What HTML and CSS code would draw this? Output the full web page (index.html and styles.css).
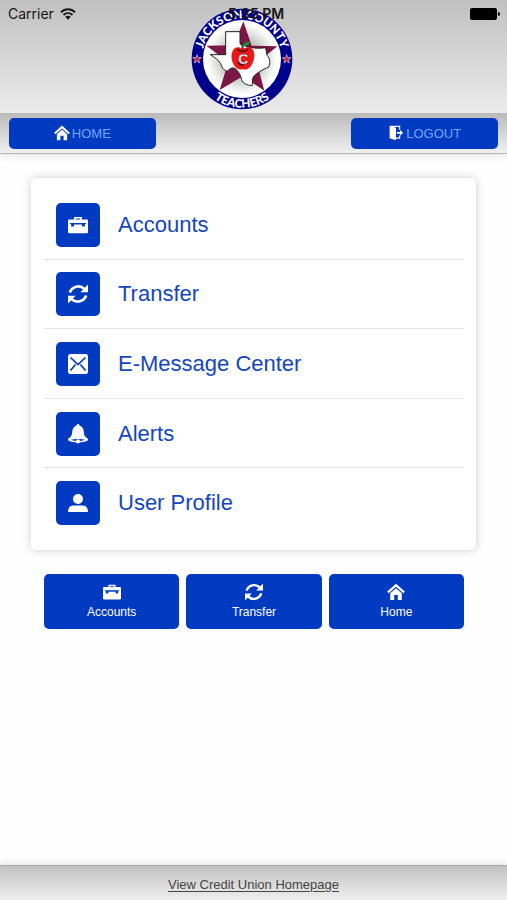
FILE: index.html
```html
<!DOCTYPE html>
<html lang="en">
<head>
<meta charset="utf-8">
<meta name="viewport" content="width=device-width, initial-scale=1">
<title>Jackson County Teachers Credit Union</title>
<link rel="stylesheet" href="styles.css">
</head>
<body>
<svg class="sprite" aria-hidden="true">
  <symbol id="home" viewBox="0 0 20 20">
    <path d="M1 10.500 10 2.400 19 10.500" fill="none" stroke="currentColor" stroke-width="2.500"/>
    <path d="M3.600 11.500 10 5.700l6.400 5.800V19h-4.400v-5.700H8V19H3.600z" fill="currentColor"/>
  </symbol>
  <symbol id="logout" viewBox="0 0 20 20">
    <path d="M2 1 10 3.500v15.500l-8-2.500z" fill="currentColor"/>
    <path d="M3 1.800h11.500v4M14.500 13v3.500H10" fill="none" stroke="currentColor" stroke-width="1.500"/>
    <path d="M11 8.600h4V6.200L19 9.800 15 13.400v-2.400h-4z" fill="currentColor"/>
  </symbol>
  <symbol id="case" viewBox="0 0 20 20">
    <path d="M6.800 5V2.800h6.400V5" fill="none" stroke="currentColor" stroke-width="1.500"/>
    <path d="M1 4.500h18q1 0 1 1v11.500q0 1.300-1.300 1.300H1.300Q0 18.300 0 17V5.500q0-1 1-1z" fill="currentColor"/>
    <path d="M1.500 8h17L16.800 9.600v2h-2.800V9.600H6v2H3.200V9.600z" fill="#003ac0"/>
  </symbol>
  <symbol id="sync" viewBox="0 0 20 20">
    <path d="M1.800 8.500C4 2.500 11.500 .2 16.500 5M18.200 11.500C16 17.500 8.500 19.800 3.500 15" fill="none" stroke="currentColor" stroke-width="2.700"/>
    <path d="M20 .6v7.600h-7.600zM0 19.400v-7.600h7.600z" fill="currentColor"/>
  </symbol>
  <symbol id="mail" viewBox="0 0 20 20">
    <rect width="20" height="20" rx="2.500" fill="currentColor"/>
    <path d="m2.500 3.500 7.500 7 7.500-7M2.500 16.500l5-6M17.500 16.500l-5-6" fill="none" stroke="#003ac0" stroke-width="1.700"/>
  </symbol>
  <symbol id="bell" viewBox="0 0 20 20">
    <path d="M10 0c1 0 1.400.7 1.400 1.500C14.500 2.300 15.600 5 15.800 8c.2 3.500 1.200 5 4.200 6.700v1.600c-2 1.500-6 2.200-10 2.200S2 17.800 0 16.300v-1.600C3 13 4 11.500 4.200 8 4.400 5 5.500 2.300 8.600 1.500 8.600.7 9 0 10 0z" fill="currentColor"/>
    <path d="M3 15.800c3-1.200 11-1.200 14 0-1.500.7-3 1-5 1.200a2 1.700 0 0 0-4 0c-2-.2-3.500-.5-5-1.200z" fill="#003ac0"/>
    <ellipse cx="10" cy="17.700" rx="1.900" ry="1.800" fill="currentColor"/>
  </symbol>
  <symbol id="user" viewBox="0 0 20 20">
    <circle cx="10" cy="6" r="5" fill="currentColor"/>
    <path d="M0 19c0-4.500 2.200-6.500 5.500-6.500h9c3.300 0 5.500 2 5.500 6.500z" fill="currentColor"/>
  </symbol>
</svg>

<header class="header">
  <svg class="logo" viewBox="60 24 306 306" role="img" aria-label="Jackson County Teachers">
    <defs>
      <path id="arc-top" d="M92 177a121 121 0 0 1 242 0"/>
      <path id="arc-bottom" d="M67 177a146 146 0 0 0 292 0"/>
      <radialGradient id="disc"><stop offset=".5" stop-color="#c2c9c2"/><stop offset=".9" stop-color="#fff"/></radialGradient>
    </defs>
    <circle cx="213" cy="177" r="151" fill="#00008c"/>
    <circle cx="213" cy="177" r="117" fill="url(#disc)"/>
    <path d="m217 64 25 73 77 2-61 49 22 84-65-43-69 41 26-84-66-49 83-1z" fill="#7c1644"/>
    <path d="M164 95h43v36c22 12 46 16 77 12l4 23c10 10 10 22 5 35-18 8-37 18-46 30-5 8-1 18-4 26-14-1-28-7-31-18-3-14-9-25-19-33-9-6-19 2-25 8-10-3-16-13-19-23-6-11-17-18-31-27h46z" fill="#fff" stroke="#222" stroke-width="3"/>
    <path d="M215 147c25-14 39 3 34 29-5 22-18 36-33 32-15 4-31-10-34-32-3-26 12-43 33-29z" fill="#ed1717"/>
    <path d="M215 148q1-13-5-18M198 148q19 13 34-1M201 186q2 9 17 9" fill="none" stroke="#491613" stroke-width="5"/>
    <path d="M213 138q6-14 24-13-4 16-24 13z" fill="#168e34"/>
    <text class="logo-letter" x="217" y="191">C</text>
    <text class="logo-text"><textPath href="#arc-top" startOffset="50%">JACKSON COUNTY</textPath></text>
    <text class="logo-text"><textPath href="#arc-bottom" startOffset="50%">TEACHERS</textPath></text>
    <g fill="#c51c39" stroke="#ddd" stroke-width="2">
      <path id="small-star" d="m78 164 3 9h10l-8 6 3 10-8-6-8 6 3-10-8-6h10z"/>
      <use href="#small-star" x="269"/>
    </g>
  </svg>
  <div class="status">
    <span class="carrier">Carrier
      <svg class="wifi" viewBox="0 0 16 12" aria-hidden="true"><g fill="none" stroke="#151515" stroke-width="1.900"><path d="M1 4.300c4-4 10-4 14 0M3.500 7c2.600-2.500 6.400-2.500 9 0"/></g><path d="M5.300 8.800q2.700-2.200 5.400 0L8 11.700z" fill="#151515"/></svg>
    </span>
    <time class="time">5:35 PM</time>
    <svg class="battery" viewBox="0 0 30 12" role="img" aria-label="Battery full"><rect width="27" height="12" rx="2"/><path d="M28 4q2 0 2 2t-2 2z"/></svg>
  </div>
</header>

<nav class="toolbar" aria-label="Session">
  <button class="tool" type="button"><svg aria-hidden="true"><use href="#home"/></svg>HOME</button>
  <button class="tool" type="button"><svg aria-hidden="true"><use href="#logout"/></svg>LOGOUT</button>
</nav>

<main class="main">
  <nav class="card" aria-label="Main menu">
    <a class="row" href="#"><span class="tile"><svg aria-hidden="true"><use href="#case"/></svg></span>Accounts</a>
    <a class="row" href="#"><span class="tile"><svg aria-hidden="true"><use href="#sync"/></svg></span>Transfer</a>
    <a class="row" href="#"><span class="tile"><svg aria-hidden="true"><use href="#mail"/></svg></span>E-Message Center</a>
    <a class="row" href="#"><span class="tile"><svg aria-hidden="true"><use href="#bell"/></svg></span>Alerts</a>
    <a class="row" href="#"><span class="tile"><svg aria-hidden="true"><use href="#user"/></svg></span>User Profile</a>
  </nav>
  <nav class="shortcuts" aria-label="Shortcuts">
    <a class="shortcut" href="#"><svg aria-hidden="true"><use href="#case"/></svg>Accounts</a>
    <a class="shortcut" href="#"><svg aria-hidden="true"><use href="#sync"/></svg>Transfer</a>
    <a class="shortcut" href="#"><svg aria-hidden="true"><use href="#home"/></svg>Home</a>
  </nav>
</main>

<footer class="footer"><a href="#">View Credit Union Homepage</a></footer>
</body>
</html>
```
FILE: styles.css
```css
* {
  box-sizing: border-box;
}

body {
  margin: 0;
  min-height: 100vh;
  display: flex;
  flex-direction: column;
  background: #fefefe;
  font-family: "Liberation Sans", Arial, sans-serif;
}

.sprite {
  position: absolute;
  width: 0;
  height: 0;
}

.header {
  position: relative;
  padding: 8px 24px 3px 0;
  background: linear-gradient(#c0c0c0, #ebebeb);
}

.logo {
  display: block;
  width: 102px;
  height: 102px;
  margin: 0 auto;
}

.logo-text {
  fill: #fff;
  font: 900 35px Lato, sans-serif;
  text-anchor: middle;
}

.logo-letter {
  fill: #fff;
  stroke: #222;
  stroke-width: 1px;
  font: 700 42px "Liberation Sans", sans-serif;
  text-anchor: middle;
}

.status {
  position: absolute;
  top: 0;
  left: 0;
  right: 0;
  display: grid;
  grid-template-columns: 1fr auto 1fr;
  align-items: center;
  height: 27px;
  padding: 0 7px 0 8px;
  color: #151515;
  font: 14px Inter, sans-serif;
}

.carrier {
  display: flex;
  align-items: center;
  gap: 6px;
}

.wifi {
  width: 16px;
  height: 12px;
}

.time {
  padding-left: 4px;
  font-weight: 600;
}

.battery {
  width: 30px;
  height: 12px;
  justify-self: end;
}

.toolbar {
  display: flex;
  justify-content: space-between;
  padding: 5px 9px 4px;
  border-bottom: 1px solid #b8b8b8;
  background: linear-gradient(#bababa, #f0f0f0);
  box-shadow: 0 1px 8px #ddd;
}

.tool {
  display: flex;
  align-items: center;
  justify-content: center;
  gap: 2px;
  width: 30%;
  height: 31px;
  padding: 0 0 1px;
  border: 0;
  border-radius: 5px;
  background: #003ac0;
  color: #78a5ff;
  font: 13px "Liberation Sans", Arial, sans-serif;
}

.tool svg {
  width: 16px;
  height: 16px;
  color: #fff;
}

.main {
  flex: 1;
  padding: 24px 31px;
}

.card {
  display: grid;
  grid-auto-rows: 1fr;
  min-height: 372px;
  padding: 12px 12px 12px 13px;
  border-radius: 5px;
  background: #fff;
  box-shadow: 0 0 8px #ccc;
}

.row {
  display: flex;
  align-items: center;
  gap: 18px;
  padding: 1px 12px 0;
  border-bottom: 1px solid #e4e4e4;
  color: #1546bd;
  font-size: 22px;
  line-height: 26px;
  text-decoration: none;
}

.row:last-child {
  border-bottom-color: transparent;
}

.tile {
  display: grid;
  place-items: center;
  width: 44px;
  height: 44px;
  border-radius: 5px;
  background: #003ac0;
  color: #fff;
}

.tile svg {
  width: 20px;
  height: 20px;
}

.shortcuts {
  display: grid;
  grid-template-columns: repeat(3, 1fr);
  gap: 7px;
  margin: 24px 12px 0 13px;
}

.shortcut {
  display: flex;
  flex-direction: column;
  align-items: center;
  gap: 3px;
  height: 55px;
  padding-top: 9px;
  border-radius: 5px;
  background: #003ac0;
  color: #fff;
  font-size: 12px;
  line-height: 16px;
  text-decoration: none;
}

.shortcut svg {
  width: 18px;
  height: 18px;
}

.footer {
  height: 35px;
  border-top: 1px solid #aaa;
  background: linear-gradient(#c2c2c2, #eee);
  box-shadow: 0 -1px 8px #ddd;
  text-align: center;
  line-height: 36px;
}

.footer a {
  color: #444;
  font-size: 13px;
  text-underline-offset: 2px;
}
```
